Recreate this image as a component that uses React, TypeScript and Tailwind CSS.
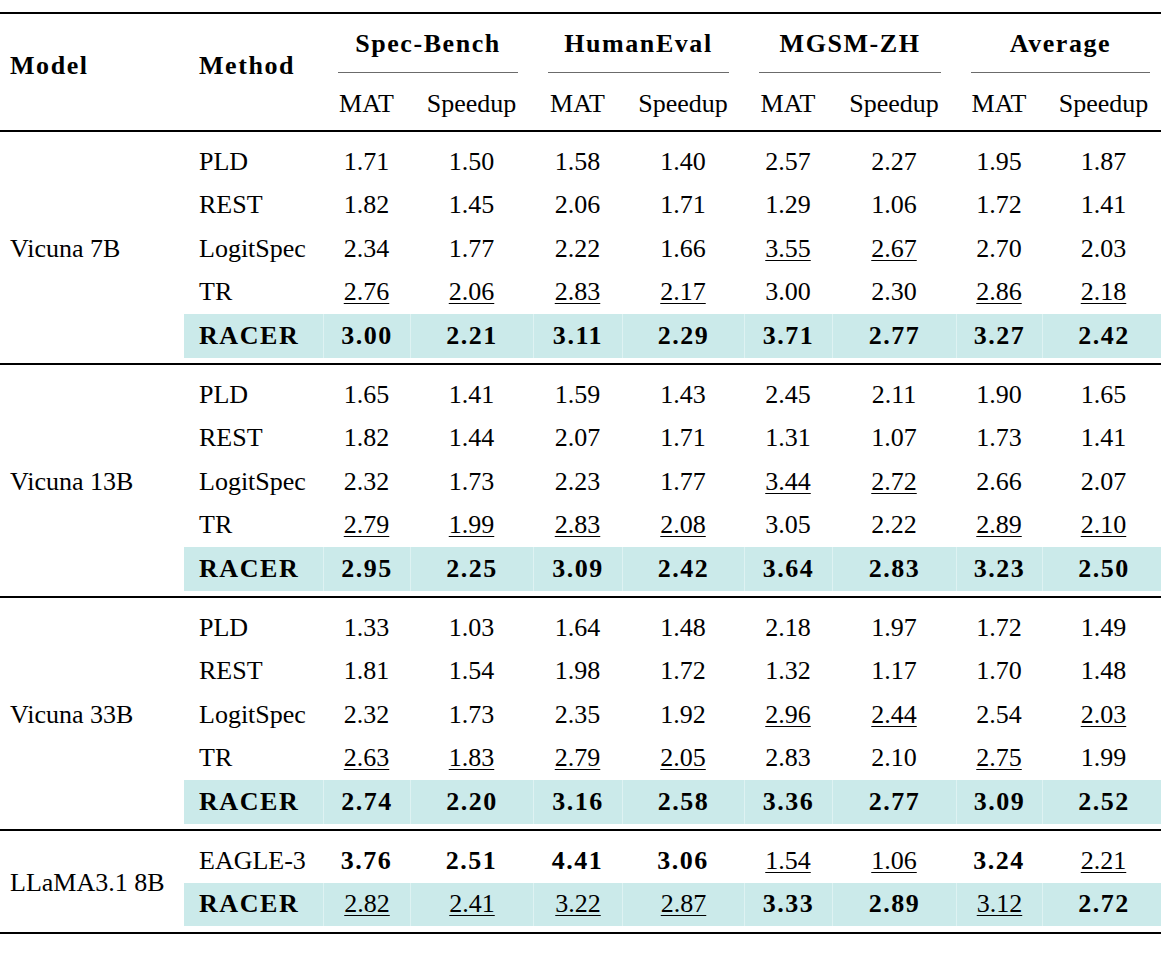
import React from "react"

const cols =
  "grid grid-cols-[184px_139px_87px_123px_89px_122px_88px_124px_86px_123px]"

type Block = {
  model: string
  rows: { method: string; vals: string[]; hl?: boolean }[]
}

// "_" prefix = underlined (second best), "*" prefix = bold (best)
const blocks: Block[] = [
  {
    model: "Vicuna 7B",
    rows: [
      { method: "PLD", vals: ["1.71", "1.50", "1.58", "1.40", "2.57", "2.27", "1.95", "1.87"] },
      { method: "REST", vals: ["1.82", "1.45", "2.06", "1.71", "1.29", "1.06", "1.72", "1.41"] },
      { method: "LogitSpec", vals: ["2.34", "1.77", "2.22", "1.66", "_3.55", "_2.67", "2.70", "2.03"] },
      { method: "TR", vals: ["_2.76", "_2.06", "_2.83", "_2.17", "3.00", "2.30", "_2.86", "_2.18"] },
      { method: "RACER", hl: true, vals: ["*3.00", "*2.21", "*3.11", "*2.29", "*3.71", "*2.77", "*3.27", "*2.42"] },
    ],
  },
  {
    model: "Vicuna 13B",
    rows: [
      { method: "PLD", vals: ["1.65", "1.41", "1.59", "1.43", "2.45", "2.11", "1.90", "1.65"] },
      { method: "REST", vals: ["1.82", "1.44", "2.07", "1.71", "1.31", "1.07", "1.73", "1.41"] },
      { method: "LogitSpec", vals: ["2.32", "1.73", "2.23", "1.77", "_3.44", "_2.72", "2.66", "2.07"] },
      { method: "TR", vals: ["_2.79", "_1.99", "_2.83", "_2.08", "3.05", "2.22", "_2.89", "_2.10"] },
      { method: "RACER", hl: true, vals: ["*2.95", "*2.25", "*3.09", "*2.42", "*3.64", "*2.83", "*3.23", "*2.50"] },
    ],
  },
  {
    model: "Vicuna 33B",
    rows: [
      { method: "PLD", vals: ["1.33", "1.03", "1.64", "1.48", "2.18", "1.97", "1.72", "1.49"] },
      { method: "REST", vals: ["1.81", "1.54", "1.98", "1.72", "1.32", "1.17", "1.70", "1.48"] },
      { method: "LogitSpec", vals: ["2.32", "1.73", "2.35", "1.92", "_2.96", "_2.44", "2.54", "_2.03"] },
      { method: "TR", vals: ["_2.63", "_1.83", "_2.79", "_2.05", "2.83", "2.10", "_2.75", "1.99"] },
      { method: "RACER", hl: true, vals: ["*2.74", "*2.20", "*3.16", "*2.58", "*3.36", "*2.77", "*3.09", "*2.52"] },
    ],
  },
  {
    model: "LLaMA3.1 8B",
    rows: [
      { method: "EAGLE-3", vals: ["*3.76", "*2.51", "*4.41", "*3.06", "_1.54", "_1.06", "*3.24", "_2.21"] },
      { method: "RACER", hl: true, vals: ["_2.82", "_2.41", "_3.22", "_2.87", "*3.33", "*2.89", "_3.12", "*2.72"] },
    ],
  },
]

function Value({ v }: { v: string }) {
  if (v.startsWith("*")) {
    return <span className="font-bold tracking-[0.06em]">{v.slice(1)}</span>
  }
  if (v.startsWith("_")) {
    return (
      <span className="underline decoration-[1px] underline-offset-[3px]">{v.slice(1)}</span>
    )
  }
  return <span>{v}</span>
}

function Rule({ thick = true }: { thick?: boolean }) {
  return <div className={thick ? "h-[2px] bg-black" : "h-[1.5px] bg-[#111]"} />
}

function BlockRows({ block }: { block: Block }) {
  const span = block.rows.length === 5 ? "row-span-5" : "row-span-2"
  return (
    <div className="pt-[8px] pb-[5.5px]">
      <div className={`${cols} auto-rows-[43.5px]`}>
        <div className={`${span} col-start-1 row-start-1 flex items-center pl-[10px]`}>
          {block.model}
        </div>
        {block.rows.map((r, i) => (
          <React.Fragment key={i}>
            <div
              className={`col-start-2 flex items-center pl-[15px] ${
                r.hl ? "bg-[#cbeaea] font-bold tracking-[0.06em]" : ""
              }`}
              style={{ gridRowStart: i + 1 }}
            >
              {r.method}
            </div>
            {r.vals.map((v, j) => (
              <div
                key={j}
                className={`flex items-center justify-center ${
                  r.hl ? "bg-[#cbeaea] border-l border-[#def2f2]" : ""
                }`}
                style={{ gridRowStart: i + 1, gridColumnStart: j + 3 }}
              >
                <Value v={v} />
              </div>
            ))}
          </React.Fragment>
        ))}
      </div>
    </div>
  )
}

export default function App() {
  const groups = ["Spec-Bench", "HumanEval", "MGSM-ZH", "Average"]
  return (
    <div className="w-[1161px] h-[966px] overflow-hidden bg-white text-black text-[26px] leading-[26px] [font-family:'Liberation_Serif','Times_New_Roman',serif]">
      <div className="pt-[12px]">
        <Rule />
        {/* HEADER */}
        <div className={`${cols} grid-rows-[58px_1px_57px]`}>
          <div className="row-span-3 flex items-center pl-[10px] pb-[13px] font-bold tracking-[0.06em]">
            Model
          </div>
          <div className="row-span-3 flex items-center pl-[15px] pb-[13px] font-bold tracking-[0.06em]">
            Method
          </div>
          {groups.map((g) => (
            <div
              key={g}
              className="col-span-2 flex items-center justify-center pt-[2px] font-bold tracking-[0.06em]"
            >
              {g}
            </div>
          ))}
          {groups.map((g) => (
            <div key={g + "-rule"} className="col-span-2 px-[15px]">
              <div className="h-[1px] bg-[#6b6b6b]" />
            </div>
          ))}
          {groups.map((g) => (
            <React.Fragment key={g + "-sub"}>
              <div className="flex items-center justify-center pt-[5px]">MAT</div>
              <div className="flex items-center justify-center pt-[5px]">Speedup</div>
            </React.Fragment>
          ))}
        </div>
        <Rule />
        {blocks.map((b, i) => (
          <React.Fragment key={b.model}>
            <BlockRows block={b} />
            <Rule />
          </React.Fragment>
        ))}
      </div>
    </div>
  )
}
